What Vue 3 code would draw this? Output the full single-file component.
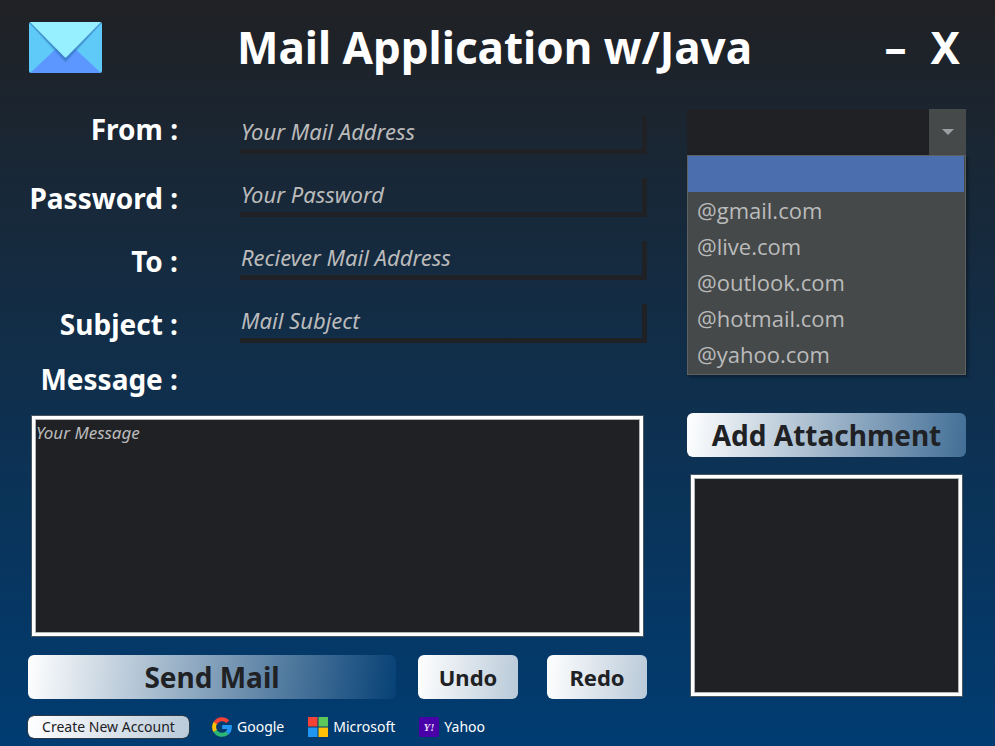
<script setup>
import { ref } from 'vue'

const fields = [
  { id: 'from', label: 'From :', hint: 'Your Mail Address', type: 'text' },
  { id: 'password', label: 'Password :', hint: 'Your Password', type: 'password' },
  { id: 'to', label: 'To :', hint: 'Reciever Mail Address', type: 'text' },
  { id: 'subject', label: 'Subject :', hint: 'Mail Subject', type: 'text' },
]
const domains = ['', '@gmail.com', '@live.com', '@outlook.com', '@hotmail.com', '@yahoo.com']

const values = ref({ from: '', password: '', to: '', subject: '' })
const message = ref('')
const domain = ref('')
const open = ref(true)

function toggle() {
  open.value = !open.value
}
function pick(d) {
  domain.value = d
  open.value = false
}
</script>

<template>
  <div class="window">
    <header class="header">
      <svg class="logo" viewBox="0 0 73 51" aria-hidden="true">
        <defs>
          <clipPath id="env"><rect width="73" height="51" rx="2" /></clipPath>
        </defs>
        <g clip-path="url(#env)">
          <rect width="73" height="51" fill="#5fc9f8" />
          <path d="M1 51 L30 24 Q36.500 18 43 24 L72 51 Z" fill="#5c97ff" />
          <path d="M0 1 L34 38.500 Q36.500 42 39 38.500 L73 1 Z" fill="#2f6fb5" opacity=".3" />
          <path d="M0 0 L34.500 37 Q36.500 40 38.500 37 L73 0 Z" fill="#2f6fb5" opacity=".45" />
          <path d="M1 0 L35 34.500 Q36.500 36.500 38 34.500 L72 0 Z" fill="#97f0ff" />
        </g>
      </svg>
      <h1 class="title">Mail Application w/Java</h1>
      <div class="controls">
        <button type="button" class="ctl" aria-label="Minimize">–</button>
        <button type="button" class="ctl" aria-label="Close">X</button>
      </div>
    </header>

    <main class="body">
      <form class="compose" @submit.prevent>
        <div class="fields">
          <div v-for="f in fields" :key="f.id" class="row">
            <label class="label" :for="f.id">{{ f.label }}</label>
            <input :id="f.id" v-model="values[f.id]" class="field" :type="f.type" :placeholder="f.hint" />
          </div>
        </div>
        <label class="label message-label" for="message">Message :</label>
        <textarea id="message" v-model="message" class="panel message" placeholder="Your Message"></textarea>
        <div class="actions">
          <button type="submit" class="btn send">Send Mail</button>
          <button type="button" class="btn small">Undo</button>
          <button type="button" class="btn small">Redo</button>
        </div>
        <div class="accounts">
          <button type="button" class="create">Create New Account</button>
          <nav class="links">
            <a href="#google" class="link">
              <svg class="icon" viewBox="0 0 20 20" aria-hidden="true">
                <g fill="none" stroke-width="4">
                  <path d="M3.200 6.200 A7.900 7.900 0 0 1 15.800 4.600" stroke="#f44336" />
                  <path d="M3.300 14.100 A7.900 7.900 0 0 1 3.200 6.100" stroke="#ffc107" />
                  <path d="M15.300 15.800 A7.900 7.900 0 0 1 3.200 14" stroke="#2bb673" />
                  <path d="M10.200 10.100 H17.900 A7.900 7.900 0 0 1 15.200 15.900" stroke="#2196f3" />
                </g>
              </svg>
              Google
            </a>
            <a href="#microsoft" class="link">
              <svg class="icon" viewBox="0 0 20 20" aria-hidden="true">
                <rect x="0" y="0" width="9.500" height="9.500" fill="#f44336" />
                <rect x="10.500" y="0" width="9.500" height="9.500" fill="#5ac85a" />
                <rect x="0" y="10.500" width="9.500" height="9.500" fill="#2196f3" />
                <rect x="10.500" y="10.500" width="9.500" height="9.500" fill="#ffc107" />
              </svg>
              Microsoft
            </a>
            <a href="#yahoo" class="link">
              <svg class="icon" viewBox="0 0 20 20" aria-hidden="true">
                <rect width="20" height="20" rx="2" fill="#4a00a8" />
                <text x="10" y="14" text-anchor="middle" class="mark">Y!</text>
              </svg>
              Yahoo
            </a>
          </nav>
        </div>
      </form>

      <aside class="side">
        <div class="domain">
          <div class="combo">
            <select v-model="domain" class="select" aria-label="Mail domain" @mousedown.prevent="toggle">
              <option v-for="d in domains" :key="d" :value="d">{{ d }}</option>
            </select>
            <span class="arrow"><svg width="12" height="6" viewBox="0 0 12 6" aria-hidden="true"><path d="M0 0 H12 L6 6 Z" fill="#9c9fa1" /></svg></span>
            <ul v-if="open" class="popup" role="listbox" aria-label="Mail domains">
              <li
                v-for="d in domains"
                :key="d"
                role="option"
                :aria-selected="d === domain"
                class="option"
                :class="{ active: d === domain }"
                @click="pick(d)"
              >{{ d }}</li>
            </ul>
          </div>
        </div>
        <button type="button" class="btn">Add Attachment</button>
        <div class="panel attachments"></div>
      </aside>
    </main>
  </div>
</template>

<style>
body {
  background: #003c72;
}
</style>

<style scoped>
.window,
.window * {
  box-sizing: border-box;
}
.window {
  min-height: 100vh;
  padding: 0 29px 8px 28px;
  background: linear-gradient(#202124, #003c72);
  font-family: "Noto Sans", "Open Sans", sans-serif;
  color: #fff;
}
button,
input,
textarea,
select {
  font-family: inherit;
  margin: 0;
}
.header {
  display: flex;
  align-items: center;
  height: 94px;
}
.logo {
  width: 73px;
  height: 51px;
  margin-left: 1px;
  flex: none;
}
.title {
  flex: 1;
  margin: 0 0 0 135px;
  font-size: 44px;
  line-height: 60px;
  font-weight: 700;
  white-space: nowrap;
}
.controls {
  display: flex;
  gap: 24px;
  padding-right: 6px;
}
.ctl {
  padding: 0;
  border: 0;
  background: none;
  color: #fff;
  font-size: 44px;
  line-height: 60px;
  font-weight: 700;
}
.body {
  display: grid;
  grid-template-columns: minmax(0, 619fr) minmax(0, 279fr);
  gap: 40px;
  padding-top: 15px;
}
.compose {
  display: flex;
  flex-direction: column;
  padding-top: 6px;
}
.fields {
  display: grid;
  gap: 24px;
}
.row {
  display: grid;
  grid-template-columns: 150px minmax(0, 1fr);
  column-gap: 62px;
  align-items: center;
}
.row:first-child {
  align-items: start;
}
.label {
  width: 150px;
  font-size: 28px;
  line-height: 28px;
  font-weight: 700;
  text-align: right;
  white-space: nowrap;
}
.field {
  width: 100%;
  height: 39px;
  padding: 0 0 2px 1px;
  border: 0 solid #202124;
  border-width: 0 5px 5px 0;
  background: none;
  color: #bbb;
  font-size: 22px;
  font-style: italic;
  outline: none;
}
.field::placeholder,
.message::placeholder {
  color: #bbb;
  opacity: 1;
}
.message-label {
  margin: 22px 0 23px;
}
.panel {
  margin: 0 4px;
  border: 3px solid #fff;
  outline: 1px solid #4a5660;
  box-shadow: inset 0 0 0 1px #b4b5b6;
  background: #202124;
}
.message {
  height: 220px;
  padding: 1px;
  color: #bbb;
  font-size: 17px;
  line-height: 26px;
  font-style: italic;
  resize: none;
}
.actions {
  display: flex;
  margin-top: 19px;
}
.btn {
  height: 44px;
  padding: 0;
  border: 0;
  border-radius: 6px;
  background: linear-gradient(97deg, #fff, #003c72 380px);
  color: #202124;
  font-size: 28px;
  font-weight: 700;
  white-space: nowrap;
}
.send {
  flex: 1;
}
.small {
  width: 100px;
  margin-left: 29px;
  font-size: 22px;
}
.send + .small {
  margin-left: 22px;
}
.accounts {
  display: flex;
  align-items: center;
  gap: 23px;
  margin-top: 17px;
}
.create {
  width: 161px;
  height: 22px;
  padding: 0;
  border: 0;
  border-radius: 6px;
  outline: 1px solid #2b3a48;
  background: linear-gradient(97deg, #fff, #003c72 600px);
  color: #202124;
  font-size: 14px;
  line-height: 22px;
  white-space: nowrap;
}
.links {
  display: flex;
  gap: 24px;
}
.link {
  display: flex;
  align-items: center;
  gap: 5px;
  color: #fff;
  font-size: 14px;
  line-height: 22px;
  text-decoration: none;
}
.icon {
  width: 20px;
  height: 20px;
}
.mark {
  fill: #e4d6f5;
  font: italic 700 11px "Liberation Serif", serif;
}
.side {
  display: flex;
  flex-direction: column;
}
.domain {
  min-height: 304px;
}
.combo {
  position: relative;
  display: flex;
  height: 46px;
}
.select {
  flex: 1;
  min-width: 0;
  padding: 0 10px;
  border: 0;
  border-radius: 0;
  appearance: none;
  background: #202124;
  color: #bbb;
  font-size: 22px;
}
.arrow {
  display: flex;
  align-items: center;
  justify-content: center;
  width: 37px;
  background: #45494a;
  pointer-events: none;
}
.popup {
  position: absolute;
  top: 100%;
  left: 0;
  right: 0;
  z-index: 1;
  margin: 0;
  padding: 0 1px 2px 0;
  border: 1px solid #5e6162;
  background: #45494a;
  box-shadow: 2px 2px 3px rgba(0, 0, 0, 0.35);
  font-family: "Open Sans", "Noto Sans", sans-serif;
  list-style: none;
}
.option {
  height: 36px;
  padding-left: 9px;
  color: #bbb;
  font-size: 22px;
  line-height: 36px;
}
.active {
  background: #4b6eaf;
}
.attachments {
  height: 221px;
  margin-top: 18px;
}
</style>
